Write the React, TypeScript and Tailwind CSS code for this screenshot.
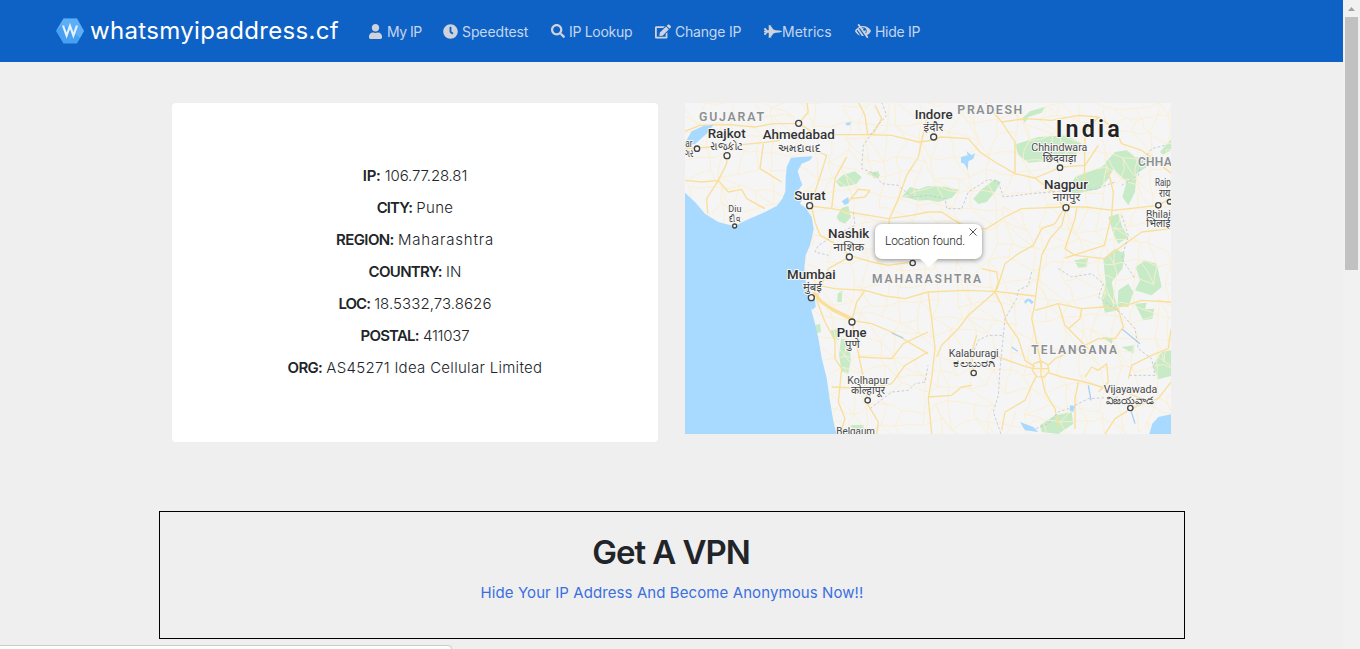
import React from "react";
import { FaUser, FaClock, FaSearch, FaEdit, FaFighterJet, FaLowVision } from "react-icons/fa";

const navItems = [
  { label: "My IP", icon: FaUser, box: "w-[74px]", gap: "gap-[5px]", size: "w-[13px] h-[15px]", track: "tracking-[-0.5px]" },
  { label: "Speedtest", icon: FaClock, box: "w-[108px]", gap: "gap-[4px]", size: "w-[15px] h-[15px]", track: "tracking-[-0.1px]" },
  { label: "IP Lookup", icon: FaSearch, box: "w-[104px]", gap: "gap-[4px]", size: "w-[14px] h-[14px]", track: "tracking-[-0.3px]" },
  { label: "Change IP", icon: FaEdit, box: "w-[109px]", gap: "gap-[4px]", size: "w-[16px] h-[15px]", track: "tracking-[-0.2px]" },
  { label: "Metrics", icon: FaFighterJet, box: "w-[91px]", gap: "gap-0", size: "w-[18px] h-[15px]", track: "tracking-[0px]" },
  { label: "Hide IP", icon: FaLowVision, box: "w-[70px]", gap: "gap-[4px]", size: "w-[16px] h-[14px]", track: "tracking-[-0.3px]" },
];

const details = [
  { name: "IP:", value: "106.77.28.81", nameTrack: "tracking-[-0.3px]", track: "tracking-[-0.15px]" },
  { name: "CITY:", value: "Pune", nameTrack: "tracking-[-0.9px]", track: "tracking-[0.3px]" },
  { name: "REGION:", value: "Maharashtra", nameTrack: "tracking-[-0.6px]", track: "tracking-[0.8px]" },
  { name: "COUNTRY:", value: "IN", nameTrack: "tracking-[-0.7px]", track: "tracking-[0px]" },
  { name: "LOC:", value: "18.5332,73.8626", nameTrack: "tracking-[-1px]", track: "tracking-[0.07px]" },
  { name: "POSTAL:", value: "411037", nameTrack: "tracking-[-0.8px]", track: "tracking-[-0.2px]" },
  { name: "ORG:", value: "AS45271 Idea Cellular Limited", nameTrack: "tracking-[-0.7px]", track: "tracking-[0.3px]" },
];

const majorRoads = [
  "M0 88L45 70L130 68L210 75L265 65L341 64L370 30L365 0",
  "M341 64L390 95L440 98L550 98L620 100L700 120L729 117L770 105L850 110L885 150L930 180L990 215L1050 228L1110 275L1135 315",
  "M0 140L30 138L90 135L170 128L235 122L285 115",
  "M0 235L50 240L100 235L125 185L126 160M100 235L65 290L68 335",
  "M100 235L130 270L170 262L185 290L240 320M235 125L225 200L290 240",
  "M400 150L425 160L400 240L378 305L390 360L405 400L450 425L493 460",
  "M375 312L440 320L520 335L610 350L680 340L729 330L770 330L800 350L850 380L905 380L960 345L1010 320L1140 315L1200 315L1285 325L1420 310L1455 290",
  "M729 30L700 165L665 220L640 290L613 350L610 400",
  "M520 0L540 40L548 98L565 95L590 50L570 10",
  "M555 265L540 285L500 290M555 265L520 262L490 300M440 320L450 230L485 165",
  "M950 60L990 120L990 215M950 60L900 0M950 60L1020 50L1100 55L1180 40L1240 45L1290 80L1310 125L1370 145L1460 215",
  "M1240 45L1200 90L1198 240L1170 290L1145 315",
  "M1050 228L1130 195L1200 190L1240 130M1270 210L1285 270L1280 340L1258 430L1140 468",
  "M1140 315L1110 365L1070 380L1045 430L1000 455L960 485L935 565",
  "M1145 315L1130 370L1095 410L1070 460L1055 560L1048 615L1040 650L1055 720L1070 795",
  "M1175 320L1170 350L1140 440L1170 460L1258 470L1370 390L1458 380",
  "M493 465L430 500L405 560L395 590M493 460L560 480L610 490L680 480M395 590L440 625L500 655L560 665L620 690L729 755",
  "M400 550L450 560L540 565L600 582L660 590L729 570L840 565L930 568L1050 582",
  "M501 655L515 600L540 565M501 660L515 730L540 850L550 910L580 960L575 996",
  "M395 595L420 660L450 715L450 770L470 800L465 850L460 900L480 950L465 996",
  "M440 855L550 860L620 845L660 790L729 750M520 765L620 770L655 725L729 690",
  "M729 570L740 650L750 740L740 830L730 890L740 996",
  "M755 765L770 730L820 680L850 640L890 605L930 570L940 540L935 510L890 500",
  "M930 570L950 610L965 660L1000 710L1020 775L1050 795",
  "M1045 800L1010 790L940 765M1055 820L1040 850L1020 895L960 930L950 985",
  "M1090 790L1110 770L1170 745L1240 710L1290 710L1315 675L1300 620L1255 615L1190 620L1120 605L1050 625",
  "M1120 605L1140 670L1210 740M1190 620L1185 650L1150 680",
  "M1090 812L1130 825L1200 840L1250 855L1320 870L1370 890",
  "M1070 825L1080 870L1110 920L1120 975M1180 840L1170 890L1170 980",
  "M1200 825L1220 795L1240 805L1265 785L1270 840L1240 870",
  "M1300 615L1340 605L1370 595L1458 600M1458 680L1450 740L1400 760L1340 790L1330 830",
  "M1330 925L1360 910L1420 890L1458 840M1330 925L1290 950L1260 996",
  "M729 885L800 880L830 855L860 850M865 820L860 750L875 700",
];

const forests = [
  "M452 238L475 218L510 208L530 225L515 245L490 252L465 254Z",
  "M545 212L580 208L585 222L570 230Z",
  "M650 285L675 255L700 262L729 252L780 254L822 263L800 288L760 300L729 294L700 296L670 288Z",
  "M455 345L470 318L490 312L498 345L480 365L462 358Z",
  "M865 290L890 262L930 232L948 240L930 270L905 300L880 306Z",
  "M990 128L1060 105L1145 100L1190 125L1170 165L1110 175L1030 182L1000 158Z",
  "M1150 265L1170 225L1250 195L1285 165L1290 190L1270 230L1240 262L1170 275Z",
  "M1262 180L1290 150L1325 145L1350 165L1400 170L1385 195L1355 215L1350 270L1330 310L1312 285L1325 240L1300 215Z",
  "M1010 50L1035 28L1080 14L1070 32L1030 45L1020 62Z",
  "M1425 150L1458 112V145L1435 158Z",
  "M1270 345L1300 335L1312 375L1330 405L1300 425L1285 395Z",
  "M1255 470L1290 440L1320 455L1312 500L1280 540L1290 590L1300 625L1260 632L1250 590L1262 545Z",
  "M1168 475L1210 468L1205 495L1180 497Z",
  "M1300 565L1330 545L1345 570L1330 615L1298 612Z",
  "M1352 495L1380 475L1415 485L1430 555L1400 580L1350 565L1365 535Z",
  "M1350 605L1385 602L1380 622L1408 620L1402 650L1375 655Z",
  "M1403 790L1430 750L1458 745V822L1420 832Z",
  "M1065 970L1110 940L1160 930L1165 965L1120 996L1070 990Z",
  "M1310 735L1348 730L1345 755Z",
  "M1250 705L1285 708L1280 725Z",
  "M468 710L490 715L498 770L490 815L470 808L462 760Z",
  "M390 670L405 665L408 690L393 695Z",
  "M458 575L472 565L470 600L457 600Z",
  "M437 685L460 682L462 715L445 710Z",
  "M495 970L535 968L540 985L505 982Z",
];

const borders = [
  "M590 0L605 40L570 80L535 130L530 200L570 215L590 245L640 250L680 285L729 280L780 290L785 320L830 320L850 270L910 232L940 240L955 285L1040 275L1150 265L1230 262L1290 240",
  "M1310 250L1360 220L1370 180L1400 140L1440 130",
  "M1310 340L1330 400L1310 470L1350 530",
  "M1040 510L1030 550L1000 565L995 590L960 650L955 700L910 700L880 715L865 750",
  "M1120 500L1160 525L1220 515L1255 545L1240 585L1310 635L1350 680L1360 740L1400 770L1410 820L1330 820",
  "M955 700L945 800L940 880L925 930L948 996",
  "M555 920L620 870L670 865L690 845L720 840L729 790",
  "M505 330L510 370L450 400L400 430L390 450L430 460",
  "M1040 985L1090 965L1120 930L1150 920L1210 890L1300 885",
];

function makeLocalRoads() {
  let seed = 71;
  const next = () => {
    seed = (seed * 16807) % 2147483647;
    return seed / 2147483647;
  };
  const cols = 28;
  const rows = 19;
  const step = 54;
  const points: number[][][] = [];
  for (let r = 0; r <= rows; r++) {
    points.push([]);
    for (let c = 0; c <= cols; c++) {
      points[r].push([Math.round(c * step + (next() - 0.5) * 46), Math.round(r * step + (next() - 0.5) * 46)]);
    }
  }
  let d = "";
  for (let r = 0; r < rows; r++) {
    for (let c = 0; c < cols; c++) {
      const [x, y] = points[r][c];
      const targets = [points[r][c + 1], points[r + 1][c], points[r + 1][c + 1]];
      targets.forEach(([tx, ty], i) => {
        if (next() < (i === 2 ? 0.35 : 0.8)) {
          d += `M${x} ${y}L${Math.round((x + tx) / 2 + (next() - 0.5) * 14)} ${Math.round((y + ty) / 2 + (next() - 0.5) * 14)}L${tx} ${ty}`;
        }
      });
    }
  }
  return d;
}

const localRoads = makeLocalRoads();

type Label = { t: string; x: number; y: number; w: number; s: number; k: "city" | "town" | "state" | "native" | "country" };

const labels: Label[] = [
  { t: "GUJARAT", x: 42, y: 58, w: 195, s: 37, k: "state" },
  { t: "Rajkot", x: 68, y: 107, w: 114, s: 39, k: "city" },
  { t: "રાજકોટ", x: 74, y: 144, w: 100, s: 34, k: "native" },
  { t: "Ahmedabad", x: 233, y: 112, w: 216, s: 39, k: "city" },
  { t: "અમદાવાદ", x: 278, y: 150, w: 128, s: 34, k: "native" },
  { t: "ar", x: 1, y: 134, w: 22, s: 34, k: "town" },
  { t: "ગર", x: 1, y: 166, w: 24, s: 30, k: "native" },
  { t: "Diu", x: 130, y: 331, w: 39, s: 28, k: "town" },
  { t: "દીવ", x: 133, y: 359, w: 34, s: 28, k: "native" },
  { t: "Surat", x: 328, y: 294, w: 94, s: 40, k: "city" },
  { t: "Nashik", x: 429, y: 409, w: 124, s: 40, k: "city" },
  { t: "नाशिक", x: 445, y: 448, w: 92, s: 34, k: "native" },
  { t: "Indore", x: 689, y: 51, w: 114, s: 39, k: "city" },
  { t: "इंदौर", x: 715, y: 88, w: 60, s: 34, k: "native" },
  { t: "PRADESH", x: 817, y: 36, w: 195, s: 37, k: "state" },
  { t: "India", x: 1112, y: 106, w: 192, s: 70, k: "country" },
  { t: "Chhindwara", x: 1039, y: 146, w: 168, s: 31, k: "town" },
  { t: "छिंदवाड़ा", x: 1073, y: 180, w: 101, s: 32, k: "native" },
  { t: "Nagpur", x: 1077, y: 261, w: 132, s: 39, k: "city" },
  { t: "नागपुर", x: 1103, y: 297, w: 83, s: 33, k: "native" },
  { t: "CHHA", x: 1359, y: 191, w: 101, s: 36, k: "state" },
  { t: "Raip", x: 1410, y: 251, w: 47, s: 31, k: "town" },
  { t: "राय", x: 1422, y: 284, w: 34, s: 31, k: "native" },
  { t: "Bhilai", x: 1383, y: 347, w: 74, s: 31, k: "town" },
  { t: "भिलाई", x: 1384, y: 375, w: 72, s: 31, k: "native" },
  { t: "Mumbai", x: 306, y: 530, w: 146, s: 39, k: "city" },
  { t: "मुंबई", x: 354, y: 567, w: 57, s: 34, k: "native" },
  { t: "MAHARASHTRA", x: 561, y: 542, w: 327, s: 36, k: "state" },
  { t: "Pune", x: 455, y: 704, w: 90, s: 39, k: "city" },
  { t: "पुणे", x: 480, y: 739, w: 44, s: 34, k: "native" },
  { t: "Kolhapur", x: 487, y: 845, w: 124, s: 31, k: "town" },
  { t: "कोल्हापूर", x: 498, y: 877, w: 102, s: 32, k: "native" },
  { t: "Belgaum", x: 454, y: 998, w: 116, s: 31, k: "town" },
  { t: "Kalaburagi", x: 791, y: 764, w: 150, s: 31, k: "town" },
  { t: "ಕಲಬುರಗಿ", x: 804, y: 796, w: 124, s: 31, k: "native" },
  { t: "TELANGANA", x: 1039, y: 757, w: 257, s: 36, k: "state" },
  { t: "Vijayawada", x: 1256, y: 873, w: 161, s: 31, k: "town" },
  { t: "విజయవాడ", x: 1262, y: 905, w: 146, s: 31, k: "native" },
];

const labelClass = {
  city: "fill-[#333333] font-medium",
  town: "fill-[#4a4a4a]",
  state: "fill-[#8c8f91] font-semibold",
  native: "fill-[#444444]",
  country: "fill-[#222222] font-semibold",
};

const markers = [
  [341, 64, 9], [126, 161, 9], [36, 140, 8], [149, 372, 6], [374, 311, 9], [493, 465, 9], [683, 483, 8],
  [746, 105, 9], [1125, 197, 8], [1143, 317, 9], [1420, 310, 8], [1454, 299, 7], [379, 587, 9], [501, 660, 9],
  [548, 895, 8], [866, 813, 8], [1336, 918, 8],
];

function RegionMap() {
  return (
    <svg className="block h-[331px] w-[486px]" viewBox="0 3 1458 993" preserveAspectRatio="none">
      <rect width="1458" height="999" fill="#f5f5f5" />
      <g fill="#c6ebc6">
        {forests.map((d) => (
          <path key={d} d={d} />
        ))}
      </g>
      <path d={localRoads} fill="none" stroke="#fcefcf" strokeWidth="2.6" />
      <g fill="none" stroke="#fadf99" strokeWidth="4" strokeLinejoin="round">
        {majorRoads.map((d) => (
          <path key={d} d={d} />
        ))}
        <path d="M1046 785L1068 777L1088 788L1092 808L1078 825L1055 824L1042 805ZM1068 777V825M1044 800H1092" />
        <path d="M385 570L410 600L440 620L500 650" strokeWidth="9" />
      </g>
      <g fill="none" stroke="#c3c6ce" strokeWidth="2.6" strokeDasharray="8 6">
        {borders.map((d) => (
          <path key={d} d={d} />
        ))}
      </g>
      <g fill="#a8daff">
        <path d="M0 272L30 300L60 335L100 360L148 373L190 352L240 330L275 312L292 290L301 268L302 230L305 195L318 167L345 165L383 163L375 175L350 185L338 207L345 230L352 248L340 264L352 290L345 305L364 320L380 345L386 380L380 410L374 432L362 460L358 500L364 550L380 580L378 620L390 665L400 708L410 768L425 828L435 898L445 958L455 999H0Z" />
        <path d="M0 122L20 88L55 72L85 68L68 92L48 110L30 126L0 130Z" />
        <path d="M1392 999L1402 965L1420 945L1458 937V999Z" />
        <path d="M828 165L848 160L845 148L860 160L870 152L865 170L850 178L848 204L838 185L828 182Z" />
        <path d="M1018 598Q1030 580 1046 600L1040 607L1030 596L1020 606Z" />
        <path d="M470 298L490 285L492 302L480 310Z" />
        <path d="M482 63L498 60L495 70L484 70Z" />
        <path d="M1155 910L1170 912L1164 930L1154 926Z" />
        <path d="M1005 960L1045 975L1060 990L1020 985Z" />
        <path d="M375 585L390 590L392 615L380 625L376 605Z" />
      </g>
      <g fill="none" stroke="#a8cff5" strokeWidth="4">
        <path d="M1312 682L1365 725M1336 920L1350 965M620 693L655 708M980 735L998 748M1210 850L1218 895" />
      </g>
      <g fill="#f6f6f6" stroke="#444444" strokeWidth="4">
        {markers.map(([x, y, r]) => (
          <circle key={`${x}-${y}`} cx={x} cy={y} r={r} />
        ))}
      </g>
      <g
        stroke="#f7f7f7"
        strokeWidth="6"
        strokeLinejoin="round"
        paintOrder="stroke"
        className="font-[Roboto,'Noto_Sans',sans-serif]"
      >
        {labels.map((l) => (
          <text
            key={l.t}
            x={l.x}
            y={l.y}
            fontSize={l.s}
            textLength={l.w}
            lengthAdjust={l.k === "state" || l.k === "country" ? "spacing" : "spacingAndGlyphs"}
            className={labelClass[l.k]}
          >
            {l.t}
          </text>
        ))}
      </g>
    </svg>
  );
}

function Logo() {
  return (
    <svg className="h-[28px] w-[30px]" viewBox="0 0 30 28">
      <path d="M8.5 1.5H22L29 14L22 26.5H8.5L1 14Z" fill="#47a0f2" />
      <path d="M8.5 1.5H22L29 14L25 21L8 7.5L1 14Z" fill="#6ab8f8" opacity=".6" />
      <path
        d="M8 8.5L11.6 18.5L15 9L18.4 18.5L22 8.5"
        fill="none"
        stroke="#e6f2ff"
        strokeWidth="2.2"
      />
    </svg>
  );
}

export default function App() {
  return (
    <div className="flex h-[649px] w-[1360px] overflow-hidden bg-[#efefef] font-[Inter,'Liberation_Sans',sans-serif] text-[#212529]">
      <div className="relative w-[1343px]">
        <nav className="flex h-[62px] items-center bg-[#0f62c5] pl-[55px]">
          <div className="flex w-[314px] items-center gap-[5px] text-white">
            <Logo />
            <span className="whitespace-nowrap text-[24px] tracking-[0.32px]">whatsmyipaddress.cf</span>
          </div>
          {navItems.map(({ label, icon: Icon, box, gap, size, track }) => (
            <a key={label} className={`flex items-center whitespace-nowrap text-[14px] text-[#c5d6ee] ${box} ${gap} ${track}`}>
              <Icon className={`shrink-0 text-[#ced3dc] ${size}`} />
              <span>{label}</span>
            </a>
          ))}
        </nav>

        <main>
          <section className="flex gap-[27px] pl-[172px] pt-[41px]">
            <div className="flex h-[339px] w-[486px] flex-col items-center rounded bg-white pt-[57px]">
              {details.map((d) => (
                <p key={d.name} className="h-8 whitespace-nowrap text-[15px] leading-8">
                  <strong className={`font-semibold ${d.nameTrack}`}>{d.name}</strong>{" "}
                  <span className={`font-light ${d.track}`}>{d.value}</span>
                </p>
              ))}
            </div>
            <div className="relative h-[331px] w-[486px] overflow-hidden">
              <RegionMap />
              <div className="absolute left-[190px] top-[121px] h-[35px] w-[107px] rounded-[7px] bg-white shadow-[0_1px_5px_rgba(0,0,0,0.45)]">
                <span className="absolute left-[10px] top-[9px] whitespace-nowrap font-[Roboto,sans-serif] text-[12px] font-light leading-[16px] tracking-[-0.12px] text-[#222222]">
                  Location found.
                </span>
                <svg className="absolute left-[94px] top-[4px] h-[8px] w-[8px]" viewBox="0 0 8 8">
                  <path d="M.5.5L7.5 7.5M7.5.5L.5 7.5" stroke="#555555" strokeWidth="1" />
                </svg>
                <svg className="absolute left-[44px] top-[34px] h-[9px] w-[20px]" viewBox="0 0 20 9">
                  <path d="M0 0H20L10 9Z" fill="#ffffff" />
                </svg>
              </div>
            </div>
          </section>

          <section className="ml-[159px] mt-[69px] flex h-[128px] w-[1026px] flex-col items-center border border-black pt-[19px]">
            <h1 className="whitespace-nowrap pr-[2px] text-[33px] font-semibold leading-[42px] tracking-[-1.05px]">Get A VPN</h1>
            <a className="mt-[8px] whitespace-nowrap text-[15px] leading-[24px] tracking-[0.09px] text-[#3b6fdf]">
              Hide Your IP Address And Become Anonymous Now!!
            </a>
          </section>
        </main>

        <div className="absolute bottom-0 left-0 h-[4px] w-[452px] rounded-tr-[4px] border-r border-t border-[#cccccc] bg-white" />
      </div>

      <div className="flex w-[17px] flex-col items-center bg-[#f1f1f1]">
        <svg className="h-[17px] w-[17px]" viewBox="0 0 17 17">
          <path d="M5 11L8.5 7L12 11Z" fill="#a3a3a3" />
        </svg>
        <div className="h-[253px] w-[13px] bg-[#c1c1c1]" />
      </div>
    </div>
  );
}
